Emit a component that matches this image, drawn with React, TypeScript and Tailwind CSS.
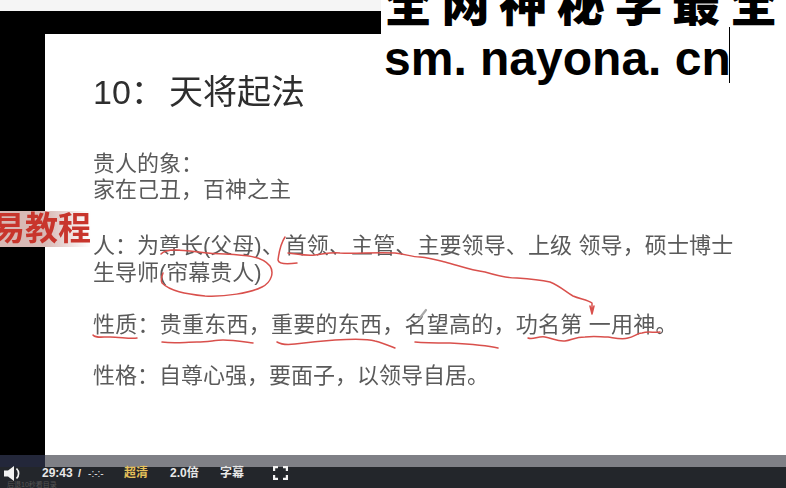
import React from "react";

const sans = "font-['Liberation_Sans','Noto_Sans_CJK_SC',sans-serif]";

function Ink() {
  return (
    <svg className="pointer-events-none absolute left-0 top-0 blur-[0.3px]" width="786" height="488" viewBox="0 0 786 488" fill="none" stroke="#d9504c" strokeWidth="1.5" strokeLinecap="round" strokeLinejoin="round">
      <path d="M163 273 C161 278 161 281 162 283 C170 291 185 294 205 296 C225 297 250 293 262 287 C272 282 274 272 270 266 C262 256 245 255 225 254 C205 254 190 250 175 250 C168 250 163 252 161 254" />
      <path d="M285 237 C281 243 279 252 278 260 C279 265 290 264 297 263" />
      <path d="M288 253 C298 254 305 256 315 255 C325 254 330 252 340 253 C355 254 375 252 395 253 C405 254 412 257 420 257 C430 258 437 260 445 262 C460 266 470 270 485 272 C495 275 505 278 517 278 C530 279 540 280 550 282 C560 286 566 292 573 296 C580 299 588 300 592 303 L592 312 M590 306 L592 314 L594 306" />
      <path d="M93 335 C95 338 100 337 110 337 C120 337 130 339 137 338" />
      <path d="M162 342 C175 344 185 342 197 342 C208 342 215 340 223 340 C233 340 245 342 253 343" />
      <path d="M277 342 C282 345 287 345 295 344 C310 342 320 341 335 340 C350 339 365 338 375 341 C383 343 390 346 395 348" />
      <path d="M415 342 C425 343 440 343 450 343 C468 344 485 345 498 348" />
      <path d="M528 338 C533 340 538 336 545 337 C552 338 558 342 565 341 C572 340 575 337 585 337 C595 336 600 337 608 337 C615 338 622 340 628 338 C634 337 637 333 642 333 C648 331 654 333 660 332" />
      <path d="M426 310 L419 319" stroke="#a8a8a8" strokeWidth="2.2" />
    </svg>
  );
}

export default function App() {
  return (
    <div lang="zh-CN" className={`relative flex h-[488px] w-[786px] flex-col overflow-hidden bg-black ${sans}`}>
      <div className="h-[11px] shrink-0 bg-[#f5f5f5]" />
      <div className="flex h-[444px] shrink-0">
        <div className="w-[45px] shrink-0 bg-black" />
        <div className="flex min-w-0 flex-1 flex-col pt-[23px]">
          <div className="relative h-[421px] bg-white">
            <div className="flex flex-col pl-[48px] pt-[38px] blur-[0.5px]">
              <h1 className="flex h-[40px] items-center text-[34px] leading-[40px] font-normal text-[#2e2e2e]">
                <span className="w-[76px]">10&#xFF1A;</span>
                <span>天将起法</span>
              </h1>
              <div className="mt-[39px] text-[22px] leading-[26px] text-[#5a5a5a]">
                <p>贵人的象&#xFF1A;</p>
                <p>家在己丑&#xFF0C;百神之主</p>
              </div>
              <div className="mt-[29px] text-[22px] leading-[27px] text-[#5a5a5a]">
                <p className="whitespace-nowrap">人&#xFF1A;为尊长(父母)、<span className="ml-[1px] tracking-[0.12px]">首领、主管、主要领导、上级 领导&#xFF0C;硕士博士</span></p>
                <p>生导师(帘幕贵人)</p>
              </div>
              <p className="mt-[25px] text-[22px] leading-[27px] tracking-[0.25px] whitespace-nowrap text-[#5a5a5a]">性质&#xFF1A;贵重东西&#xFF0C;重要的东西&#xFF0C;名望高的&#xFF0C;功名第 一用神。</p>
              <p className="mt-[24px] text-[22px] leading-[27px] whitespace-nowrap text-[#5a5a5a]">性格&#xFF1A;自尊心强&#xFF0C;要面子&#xFF0C;以领导自居。</p>
            </div>
          </div>
        </div>
      </div>
      <div className="flex h-[12px] shrink-0">
        <div className="w-[45px] bg-[#23273a]" />
        <div className="flex-1 bg-[#7f8086]" />
      </div>
      <div className="flex h-[21px] shrink-0 items-start bg-[#23262b] text-[11px] leading-[13px] text-[#e8e8e8]">
        <svg className="ml-[3px] mt-[-2px]" width="19" height="17" viewBox="0 0 19 17">
          <path d="M1 5.5h4l6-4.5v15l-6-4.500H1z" fill="#f2f2f2" />
          <path d="M13.500 3.500c2.800 2.800 2.800 7.200 0 10" stroke="#f2f2f2" strokeWidth="1.700" fill="none" />
        </svg>
        <span className="ml-[20px] w-[32px] text-[12px] font-semibold">29:43</span>
        <span className="ml-[4px] font-semibold">/</span>
        <span className="ml-[7px] w-[19px] text-[10px]">-:-:-</span>
        <span className="ml-[17px] w-[24px] text-[12px] font-semibold text-[#e6c15a]">超清</span>
        <span className="ml-[22px] w-[30px] text-[12px] font-semibold">2.0倍</span>
        <span className="ml-[20px] w-[24px] text-[12px] font-semibold">字幕</span>
        <svg className="ml-[29px] mt-[-1px]" width="15" height="14" viewBox="0 0 15 14" fill="none" stroke="#f2f2f2" strokeWidth="2.400">
          <path d="M1 5V1h4M10 1h4v4M14 9v4h-4M5 13H1V9" />
        </svg>
      </div>
      <div className="absolute left-[7px] top-[481px] text-[7px] leading-[7px] whitespace-nowrap text-[#555]">后退10秒看目录</div>
      <Ink />
      <div className="absolute left-0 top-[211px] flex h-[36px] w-[91px] items-center justify-end overflow-hidden bg-gradient-to-r from-[#d8b9b5] from-50% to-white/0 text-[33px] leading-[36px] font-bold whitespace-nowrap text-[#c8352c] blur-[0.4px]">
        易教程
      </div>
      <div className="absolute left-[381px] top-0 h-[95px] w-[405px] overflow-hidden bg-white font-bold text-black">
        <div className="mt-[-28px] h-[56px] pl-[3px] text-[48px] leading-[56px] tracking-[9.600px] whitespace-nowrap font-['Noto_Sans_CJK_SC',sans-serif] font-black">全网神秘学最全</div>
        <div className="mt-[8px] flex items-start">
          <span className="pl-[3px] text-[48px] leading-[46px] whitespace-nowrap font-['Liberation_Sans',sans-serif]">sm. nayona. cn</span>
        </div>
        <span className="absolute left-[348px] top-[27px] h-[56px] w-px bg-black" />
      </div>
    </div>
  );
}
